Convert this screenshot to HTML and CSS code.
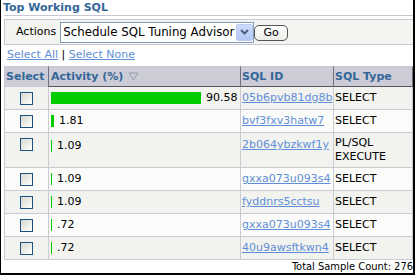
FILE: index.html
```html
<!DOCTYPE html>
<html lang="en">
<head>
  <meta charset="UTF-8">
  <title>Top Working SQL</title>
  <link rel="stylesheet" href="styles.css">
</head>
<body>
  <div class="frame">
    <h1>Top Working SQL</h1>

    <div class="actions">
      <label for="action">Actions</label>
      <div class="dropdown" id="action">
        <span class="value">Schedule SQL Tuning Advisor</span>
        <span class="arrow">
          <svg width="9" height="6" viewBox="0 0 9 6"><path d="M1 1 L4.5 4.5 L8 1" fill="none" stroke="#4d6185" stroke-width="2"/></svg>
        </span>
      </div>
      <button class="go">Go</button>
    </div>

    <div class="links">
      <a href="#">Select All</a> | <a href="#">Select None</a>
    </div>

    <table class="sql">
      <thead>
        <tr>
          <th class="c-sel">Select</th>
          <th class="c-act sort">Activity (%) <svg class="sorted" width="11" height="9" viewBox="0 0 11 9"><path d="M1 1 H10 L5.5 8 Z" fill="none" stroke="#9a9cab" stroke-width="1"/></svg></th>
          <th class="c-id sort">SQL ID</th>
          <th class="sort">SQL Type</th>
        </tr>
      </thead>
      <tbody>
        <tr>
          <td class="sel"><input type="checkbox"></td>
          <td class="act"><div class="bar"><span class="fill" style="width:150px"></span>90.58</div></td>
          <td class="id"><a href="#">05b6pvb81dg8b</a></td>
          <td class="type">SELECT</td>
        </tr>
        <tr>
          <td class="sel"><input type="checkbox"></td>
          <td class="act"><div class="bar"><span class="fill" style="width:3px"></span>1.81</div></td>
          <td class="id"><a href="#">bvf3fxv3hatw7</a></td>
          <td class="type">SELECT</td>
        </tr>
        <tr class="tall">
          <td class="sel"><input type="checkbox"></td>
          <td class="act"><div class="bar"><span class="fill" style="width:1px"></span>1.09</div></td>
          <td class="id"><a href="#">2b064ybzkwf1y</a></td>
          <td class="type">PL/SQL<br>EXECUTE</td>
        </tr>
        <tr>
          <td class="sel"><input type="checkbox"></td>
          <td class="act"><div class="bar"><span class="fill" style="width:1px"></span>1.09</div></td>
          <td class="id"><a href="#">gxxa073u093s4</a></td>
          <td class="type">SELECT</td>
        </tr>
        <tr>
          <td class="sel"><input type="checkbox"></td>
          <td class="act"><div class="bar"><span class="fill" style="width:1px"></span>1.09</div></td>
          <td class="id"><a href="#">fyddnrs5cctsu</a></td>
          <td class="type">SELECT</td>
        </tr>
        <tr>
          <td class="sel"><input type="checkbox"></td>
          <td class="act"><div class="bar"><span class="fill" style="width:1px"></span>.72</div></td>
          <td class="id"><a href="#">gxxa073u093s4</a></td>
          <td class="type">SELECT</td>
        </tr>
        <tr>
          <td class="sel"><input type="checkbox"></td>
          <td class="act"><div class="bar"><span class="fill" style="width:1px"></span>.72</div></td>
          <td class="id"><a href="#">40u9awsftkwn4</a></td>
          <td class="type">SELECT</td>
        </tr>
      </tbody>
    </table>

    <div class="total">Total Sample Count: 276</div>
  </div>
</body>
</html>
```
FILE: styles.css
```css
body {
  margin: 0;
  font-family: "DejaVu Sans", Verdana, sans-serif;
  font-size: 11px;
  line-height: 14px;
  color: #000;
  background: #fff;
}
.frame {
  width: 415px;
  height: 275px;
  box-sizing: border-box;
  padding-left: 3px;
  border-left: 1px solid #000;
  border-right: 2px solid #000;
  border-bottom: 2px solid #000;
  overflow: hidden;
}
h1 {
  margin: 0;
  font-size: 11px;
  font-weight: bold;
  line-height: 15px;
  color: #336699;
  text-indent: -1px;
  border-bottom: 1px solid #c6c9d4;
}
.actions {
  display: flex;
  align-items: center;
  height: 24px;
  margin-top: 3px;
  padding-left: 11px;
  background: #f3f3f0;
  border: 1px solid #c6c9d4;
  border-right: 0;
}
.actions label {
  margin-right: 4px;
}
.dropdown {
  display: flex;
  width: 194px;
  height: 21px;
  box-sizing: border-box;
  border: 1px solid #7f9db9;
  background: #fff;
}
.dropdown .value {
  flex: 1;
  padding-left: 2px;
  font-size: 11.8px;
  line-height: 19px;
  white-space: nowrap;
  overflow: hidden;
}
.dropdown .arrow {
  display: flex;
  align-items: center;
  justify-content: center;
  width: 17px;
  margin: 1px 0;
  box-sizing: border-box;
  border: 1px solid #bccbee;
  border-radius: 2px;
  background: linear-gradient(#cddbfd, #b3c7f5);
}
.go {
  width: 34px;
  height: 16px;
  margin: 1px 0 0 0;
  padding: 0;
  font: 11px "DejaVu Sans", Verdana, sans-serif;
  line-height: 14px;
  color: #000;
  border: 1px solid #555;
  border-radius: 5px;
  background: linear-gradient(#ffffff, #ecece8);
}
.links {
  margin-top: 3px;
  padding-left: 3px;
}
a {
  color: #5f8fd8;
}
table.sql {
  width: 409px;
  margin-top: 4px;
  table-layout: fixed;
  border-collapse: separate;
  border-spacing: 0;
}
.sql th {
  box-sizing: border-box;
  padding: 3px 2px 2px;
  text-align: left;
  font-weight: bold;
  color: #336699;
  background: #ccccd6;
  border-top: 1px solid #c6c9d4;
  border-left: 1px solid #c6c9d4;
  border-bottom: 1px solid #c6c9d4;
  white-space: nowrap;
}
.sql th.c-sel {
  width: 44px;
  padding-left: 1px;
}
.sql th.c-act {
  width: 192px;
}
.sql th.c-id {
  width: 93px;
  padding-left: 1px;
}
.sql th.sort {
  border-left-color: #6e7080;
  border-bottom-color: #55565f;
}
.sql th:last-child {
  padding-left: 1px;
  border-right: 1px solid #6e7080;
}
.sorted {
  vertical-align: -1px;
  margin-left: 1px;
}
.sql td {
  padding: 4px 1px 0;
  vertical-align: top;
  border-left: 1px solid #c9cbd3;
  border-bottom: 1px solid #c9cbd3;
  white-space: nowrap;
}
.sql td:last-child {
  border-right: 1px solid #c9cbd3;
}
.sql tbody tr:nth-child(odd) td {
  background: #f2f2ef;
}
.sql tbody tr:nth-child(even) td {
  background: #fbfbf9;
}
.sql td.sel {
  padding: 5px 0 4px;
}
.sql td.act {
  padding: 5px 2px 0;
}
.sql td.type {
  padding: 3px 1px;
  vertical-align: middle;
}
.sql tr.tall td.act {
  padding-top: 7px;
}
.sql tr.tall td.id {
  padding-top: 5px;
}
input[type="checkbox"] {
  -webkit-appearance: none;
  appearance: none;
  display: block;
  width: 13px;
  height: 13px;
  margin: 0 auto;
  border: 1px solid #1c5180;
  background: linear-gradient(135deg, #d8d8d0, #ffffff);
}
.bar {
  display: flex;
  align-items: center;
  height: 12px;
}
.bar .fill {
  height: 12px;
  margin-right: 5px;
  background: #00cc00;
}
.total {
  font-family: "DejaVu Sans Condensed", "DejaVu Sans", sans-serif;
  text-align: right;
}
```
